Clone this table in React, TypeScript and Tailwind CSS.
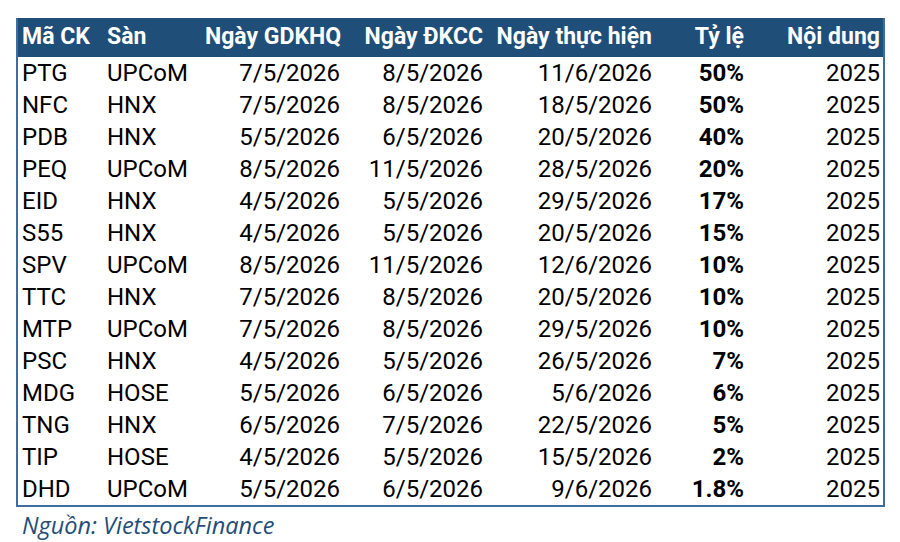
import React from 'react';

type Row = [string, string, string, string, string, string, string];

const rows: Row[] = [
  ['PTG', 'UPCoM', '7/5/2026', '8/5/2026', '11/6/2026', '50%', '2025'],
  ['NFC', 'HNX', '7/5/2026', '8/5/2026', '18/5/2026', '50%', '2025'],
  ['PDB', 'HNX', '5/5/2026', '6/5/2026', '20/5/2026', '40%', '2025'],
  ['PEQ', 'UPCoM', '8/5/2026', '11/5/2026', '28/5/2026', '20%', '2025'],
  ['EID', 'HNX', '4/5/2026', '5/5/2026', '29/5/2026', '17%', '2025'],
  ['S55', 'HNX', '4/5/2026', '5/5/2026', '20/5/2026', '15%', '2025'],
  ['SPV', 'UPCoM', '8/5/2026', '11/5/2026', '12/6/2026', '10%', '2025'],
  ['TTC', 'HNX', '7/5/2026', '8/5/2026', '20/5/2026', '10%', '2025'],
  ['MTP', 'UPCoM', '7/5/2026', '8/5/2026', '29/5/2026', '10%', '2025'],
  ['PSC', 'HNX', '4/5/2026', '5/5/2026', '26/5/2026', '7%', '2025'],
  ['MDG', 'HOSE', '5/5/2026', '6/5/2026', '5/6/2026', '6%', '2025'],
  ['TNG', 'HNX', '6/5/2026', '7/5/2026', '22/5/2026', '5%', '2025'],
  ['TIP', 'HOSE', '4/5/2026', '5/5/2026', '15/5/2026', '2%', '2025'],
  ['DHD', 'UPCoM', '5/5/2026', '6/5/2026', '9/6/2026', '1.8%', '2025'],
];

const headers = ['Mã CK', 'Sàn', 'Ngày GDKHQ', 'Ngày ĐKCC', 'Ngày thực hiện', 'Tỷ lệ', 'Nội dung'];

// per-column alignment / padding
const cellCls = [
  'pl-1 text-left',
  'pl-[5px] text-left',
  'pr-[3px] text-right',
  'pr-[3px] text-right',
  'pr-[3px] text-right',
  'pr-[3px] text-right',
  'pr-[3px] text-right',
];

const grid = 'grid grid-cols-[84px_103px_138px_143px_169px_92px_136px]';

export default function App() {
  return (
    <div className="w-[900px] h-[542px] bg-white pt-[18px] pl-[16px] font-['Roboto',sans-serif] text-black">
      <div className="w-[869px] border-2 border-[#3f6d9e]">
        <div className={`${grid} h-[39px] -mt-[2px] bg-[#1f4e79] text-white text-[23px] font-bold items-center whitespace-nowrap`}>
          {headers.map((h, i) => (
            <div key={h} className={cellCls[i]}>
              {h}
            </div>
          ))}
        </div>
        {rows.map((r) => (
          <div key={r[0]} className={`${grid} h-[32px] items-center leading-none text-[24px]`}>
            {r.map((c, i) => (
              <div key={i} className={i === 5 ? `${cellCls[i]} font-bold` : cellCls[i]}>
                {c}
              </div>
            ))}
          </div>
        ))}
      </div>
      <div className="pl-[6px] mt-[2px] font-['Open_Sans',sans-serif] italic text-[23.5px] text-[#1f4e79] leading-[32px]">
        Nguồn: VietstockFinance
      </div>
    </div>
  );
}
